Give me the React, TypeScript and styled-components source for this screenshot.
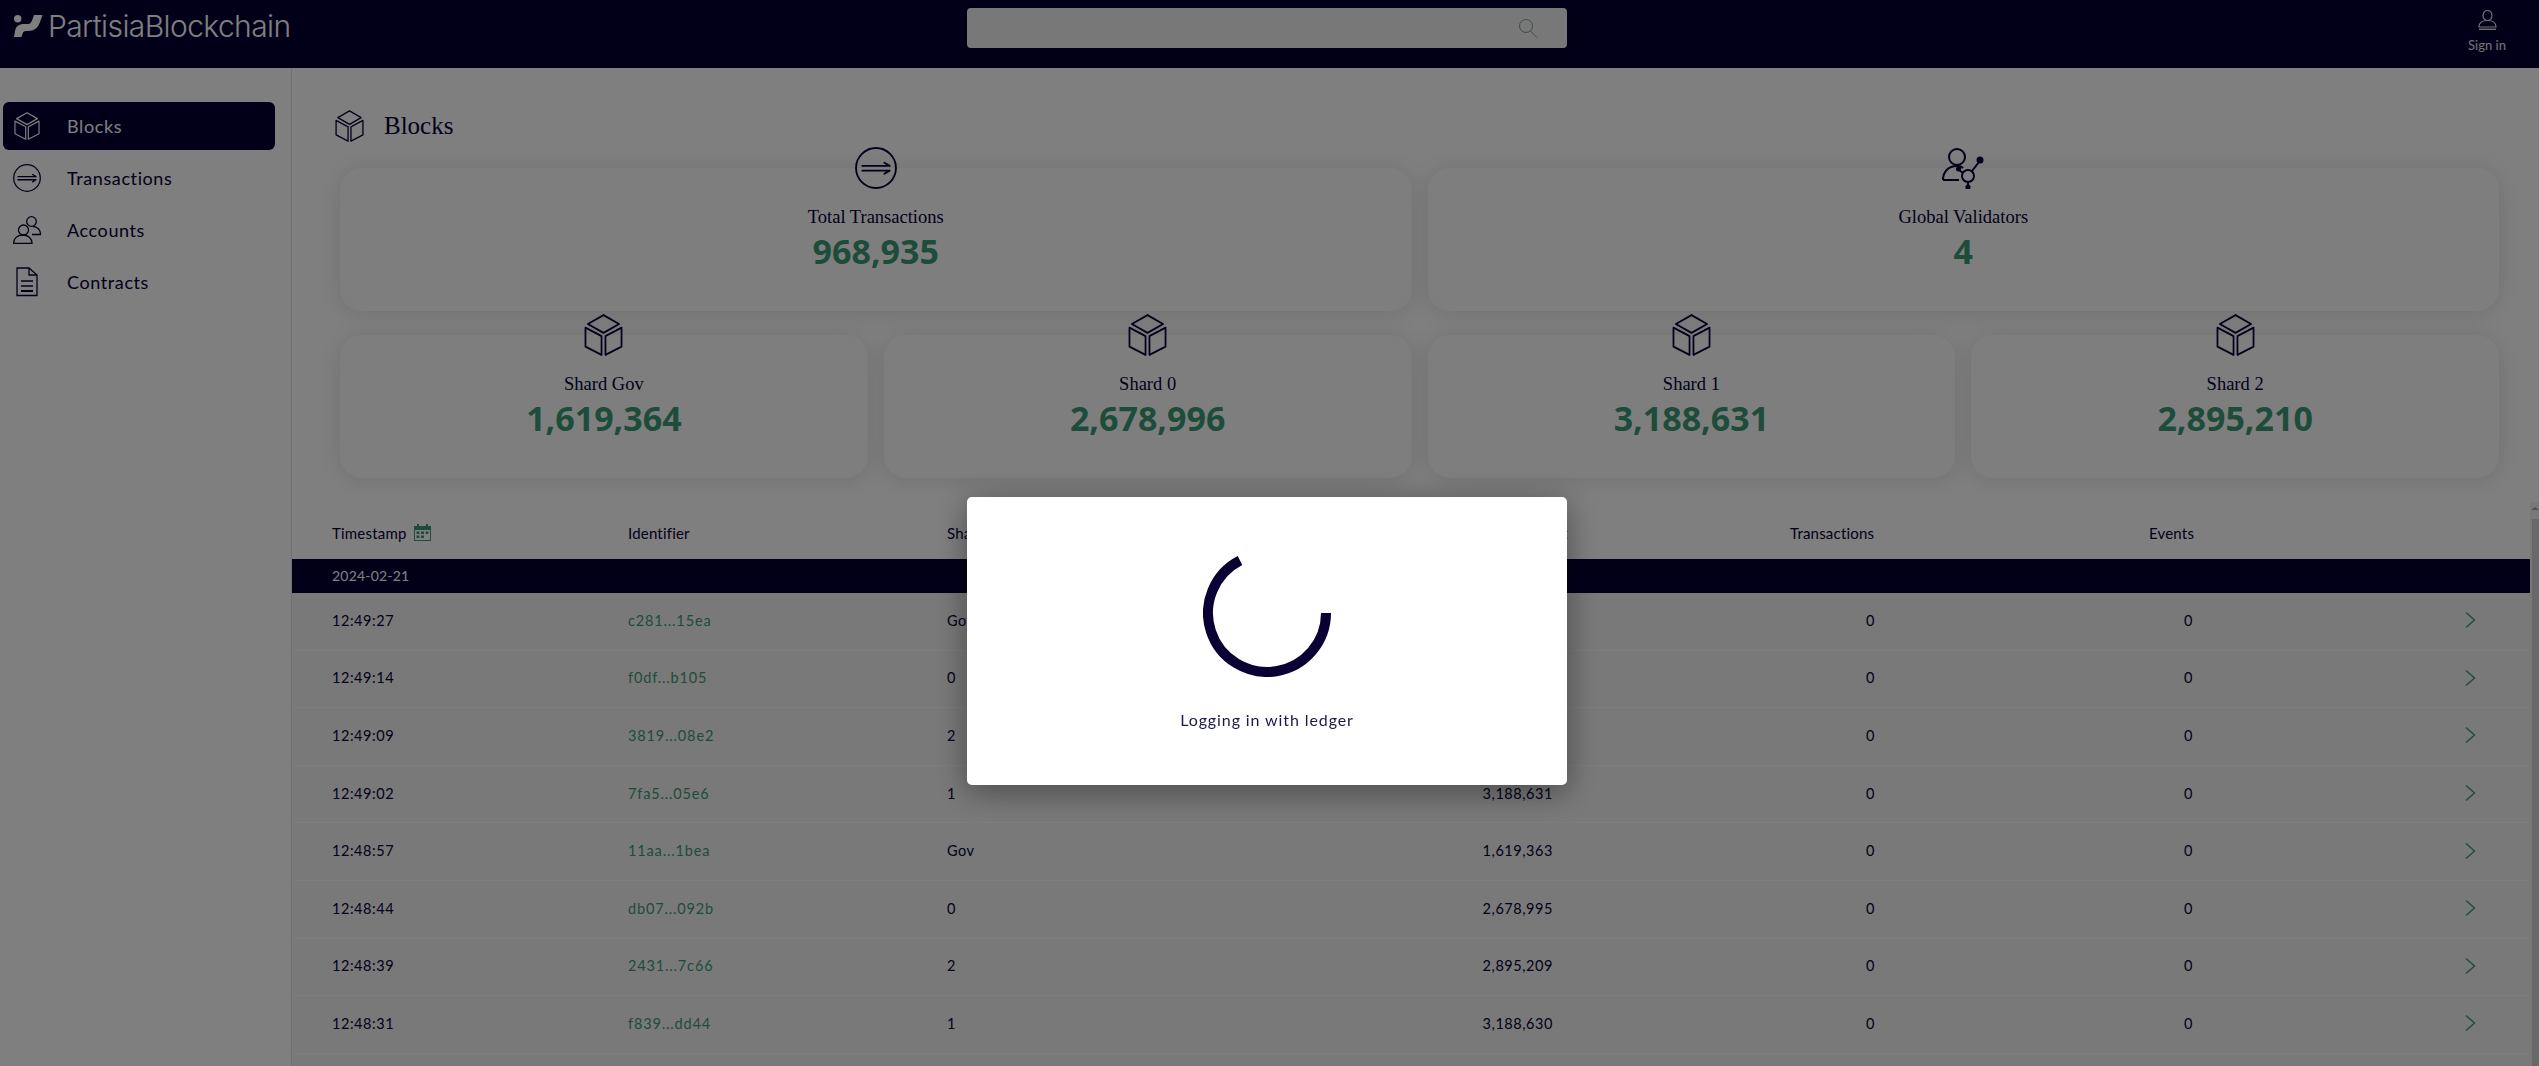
import styled, { createGlobalStyle } from "styled-components";

const navy = "#050033";
const green = "#3a9a75";

const GlobalStyle = createGlobalStyle`
    html, body {
        margin: 0;
        height: 100%;
        overflow: hidden;
        background: #ffffff;
        font-family: "Lato", "Open Sans", sans-serif;
        color: ${navy};
    }
    * { box-sizing: border-box; }
`;

const PageDiv = styled.div`
    display: flex;
    flex-direction: column;
    height: 100vh;
    overflow: hidden;
`;
const HeaderBar = styled.header`
    flex: 0 0 68px;
    display: grid;
    grid-template-columns: 1fr 600px 1fr;
    padding-right: 5px;
    background: ${navy};
    color: #ffffff;
`;
const LogoLink = styled.div`
    display: flex;
    align-items: flex-start;
    gap: 5px;
    padding: 15px 0 0 14px;
`;
const LogoText = styled.span`
    font-family: "Inter", sans-serif;
    font-weight: 300;
    font-size: 30px;
    line-height: 30px;
    letter-spacing: -0.6px;
    white-space: nowrap;
    margin-top: -4px;
`;
const SearchBox = styled.div`
    display: flex;
    align-items: center;
    justify-content: flex-end;
    height: 40px;
    margin-top: 8px;
    padding-right: 29px;
    border-radius: 4px;
    background: #f0f0f0;
    color: #6f9f8f;
`;
const SignIn = styled.div`
    justify-self: end;
    display: flex;
    flex-direction: column;
    align-items: center;
    gap: 7px;
    width: 60px;
    margin-right: 17px;
    padding-top: 10px;
    font-size: 13px;
    line-height: 16px;
    color: #e4e4ea;
`;
const BodyRow = styled.div`
    flex: 1;
    min-height: 0;
    display: flex;
`;
const Sidebar = styled.nav`
    flex: 0 0 292px;
    display: flex;
    flex-direction: column;
    gap: 4px;
    padding: 34px 16px 0 3px;
    border-right: 1px solid #e0e0e0;
`;
const NavItem = styled.div<{ $active?: boolean }>`
    display: flex;
    align-items: center;
    height: 48px;
    padding-left: 10px;
    border-radius: 6px;
    font-size: 18px;
    letter-spacing: 0.6px;
    background: ${(p) => (p.$active ? navy : "transparent")};
    color: ${(p) => (p.$active ? "#ffffff" : navy)};
`;
const NavIcon = styled.span`
    display: flex;
    justify-content: center;
    width: 28px;
    margin-right: 26px;
`;
const MainArea = styled.main`
    flex: 1;
    min-width: 0;
    display: flex;
    flex-direction: column;
    padding-top: 41px;
`;
const TitleRow = styled.div`
    display: flex;
    align-items: center;
    gap: 20px;
    height: 34px;
    padding-left: 43px;
    font-family: "Liberation Serif", serif;
    font-size: 25px;
`;
const CardGrid = styled.div`
    display: grid;
    grid-template-columns: repeat(4, 1fr);
    column-gap: 16px;
    row-gap: 24px;
    margin-top: 25px;
    padding: 0 40px 0 48px;
`;
const StatCard = styled.div<{ $span: number }>`
    grid-column: span ${(p) => p.$span};
    display: flex;
    flex-direction: column;
    align-items: center;
    height: 143px;
    border-radius: 22px;
    background: #fdfdfd;
    box-shadow: 0 2px 24px rgba(0, 0, 0, 0.12);
`;
const CardIcon = styled.div`
    height: 42px;
    margin-top: -21px;
`;
const CardTitle = styled.div`
    margin-top: 18px;
    font-family: "Liberation Serif", serif;
    font-size: 18.5px;
    line-height: 20px;
`;
const CardValue = styled.div`
    margin-top: 1px;
    font-family: "Open Sans", sans-serif;
    font-weight: 700;
    font-size: 34px;
    line-height: 46px;
    color: ${green};
`;
const TableSection = styled.section`
    flex: 1;
    min-height: 0;
    display: flex;
    margin-top: 24px;
    overflow: hidden;
`;
const TableArea = styled.div`
    flex: 1;
    min-width: 0;
    background: #f2f2f2;
`;
const columns = "296px 319px 534px 309px 359px 1fr auto";
const HeadRow = styled.div`
    display: grid;
    grid-template-columns: ${columns};
    align-items: center;
    height: 57px;
    padding: 4px 54px 0 40px;
    background: #ffffff;
    font-size: 15px;
`;
const HeadCell = styled.div`
    display: flex;
    align-items: center;
    gap: 7px;
    letter-spacing: 0.2px;
`;
const DateRow = styled.div`
    height: 34px;
    padding-left: 40px;
    background: ${navy};
    color: #ffffff;
    font-size: 14px;
    line-height: 34px;
    letter-spacing: 0.2px;
`;
const DataRow = styled.div`
    display: grid;
    grid-template-columns: ${columns};
    align-items: center;
    height: 57.6px;
    padding: 0 54px 2px 40px;
    border-bottom: 1px solid #fafafa;
    font-size: 14.5px;
    letter-spacing: 0.55px;
`;
const LinkCell = styled.div`
    color: ${green};
    letter-spacing: 0.85px;
`;
const NumberCell = styled.div<{ $width: number }>`
    width: ${(p) => p.$width}px;
    text-align: right;
`;
const ChevronCell = styled.div`
    display: flex;
    justify-content: flex-end;
    color: ${green};
`;
const ScrollTrack = styled.div`
    flex: 0 0 9px;
    display: flex;
    flex-direction: column;
    align-items: flex-end;
    background: #f1f1f1;
`;
const ScrollArrow = styled.div`
    width: 0;
    height: 0;
    margin: 5px 0 9px 0;
    border-left: 4px solid transparent;
    border-right: 4px solid transparent;
    border-bottom: 3px solid #a3a3a3;
`;
const ScrollThumb = styled.div`
    flex: 1;
    width: 7px;
    background: #d0d0d0;
`;
const Overlay = styled.div`
    position: fixed;
    inset: 0;
    display: flex;
    justify-content: center;
    align-items: flex-start;
    padding: 497px 5px 0 0;
    background: rgba(0, 0, 0, 0.5);
`;
const Modal = styled.div`
    display: flex;
    flex-direction: column;
    align-items: center;
    width: 600px;
    height: 288px;
    padding-top: 52px;
    border-radius: 5px;
    background: #ffffff;
    box-shadow: 0 6px 32px rgba(0, 0, 0, 0.4);
`;
const ModalText = styled.div`
    margin-top: 33px;
    font-size: 16px;
    line-height: 20px;
    letter-spacing: 0.9px;
    color: #1d1a47;
`;

const line = { fill: "none", stroke: "currentColor", strokeWidth: 1.800, strokeLinejoin: "round" as const, strokeLinecap: "round" as const };

const PartisiaMark = () => (
    <svg width="29" height="23" viewBox="0 0 29 23" fill="#ffffff">
        <circle cx="3.700" cy="3.800" r="3.700" />
        <path d="M0 22 L1 16 C2 11 5 9 10 9 L14 9 C16 9 17 8 18 5.500 L20 0 L28.500 0 L26 7 C24 13 20 16 14 16 L12 16 C10 16 9 17 8.600 18.500 L7.500 22 Z" />
    </svg>
);
const CubeIcon = ({ size = 40 }: { size?: number }) => (
    <svg width={Math.round(size * 0.92)} height={size} viewBox="0 0 40 40" preserveAspectRatio="none" {...line}>
        <path d="M20 1 L36 9.500 L20 18 L4 9.500 Z" />
        <path d="M1.500 13 V31 L18 39 V21 Z" />
        <path d="M38.500 13 V31 L22 39 V21 Z" />
    </svg>
);
const TransferIcon = ({ size = 40 }: { size?: number }) => (
    <svg width={size} height={size} viewBox="0 0 40 40" {...line}>
        <circle cx="20" cy="20" r="19" />
        <path d="M7 18 H33 L28 15" />
        <path d="M7 22.500 H33 L28 25.500" />
    </svg>
);
const AccountsIcon = ({ size = 28 }: { size?: number }) => (
    <svg width={size} height={size} viewBox="0 0 28 28" fill="none" stroke="currentColor" strokeWidth="1.300">
        <circle cx="18.500" cy="5.500" r="4.800" />
        <path d="M19 18.500 H27.500 C27.500 14 24.500 10.500 20 10.500" />
        <circle cx="10.500" cy="14" r="5" />
        <path d="M0.700 27.300 C0.700 22 4.500 19 10 19 C15 19 19 22 19 27.300 Z" />
    </svg>
);
const ContractIcon = () => (
    <svg width="24" height="30" viewBox="0 0 24 30" fill="none" stroke="currentColor" strokeWidth="1.300">
        <path d="M2 1 H14 L22 8 V28.500 H2 Z" />
        <path d="M14 1 V8 H22" />
        <path d="M6 14 H18 M6 19 H18" />
        <path d="M6 24 H18" strokeWidth="2" />
    </svg>
);
const PersonIcon = () => (
    <svg width="19" height="20" viewBox="0 0 19 20" fill="none" stroke="currentColor" strokeWidth="1.200">
        <ellipse cx="9.500" cy="5.500" rx="4.500" ry="5" />
        <path d="M1 17 C1 13 4 10.500 9.500 10.500 C15 10.500 18 13 18 17 Z" />
        <path d="M1 19.300 H18" strokeWidth="1.400" />
    </svg>
);
const ValidatorIcon = () => (
    <svg width="42" height="42" viewBox="0 0 42 42" fill="none" stroke="currentColor" strokeWidth="2">
        <circle cx="15" cy="10" r="8" />
        <path d="M1 33 C1 25 6 19 15 19 C18 19 20 20 21 21 M1 33 H17" />
        <circle cx="26" cy="29" r="6" />
        <path d="M30 24 L37 15 M21 26 L17 23 M26 35 V39" />
        <circle cx="38" cy="13" r="2.500" fill="currentColor" />
        <circle cx="16.500" cy="22" r="1.500" fill="currentColor" />
        <circle cx="26" cy="40" r="1.600" fill="currentColor" />
    </svg>
);
const SearchIcon = () => (
    <svg width="20" height="20" viewBox="0 0 20 20" fill="none" stroke="currentColor" strokeWidth="1">
        <circle cx="8" cy="8" r="6.500" />
        <path d="M12.500 13 L19 19.500" />
    </svg>
);
const CalendarIcon = () => (
    <svg width="17" height="17" viewBox="0 0 17 17" fill={green}>
        <path d="M3 0 H5 V2 H12 V0 H14 V2 H17 V17 H0 V2 H3 Z M1 6 V16 H16 V6 Z" />
        <path d="M2.500 7.500 H5.500 V10 H2.500 Z M7 7.500 H10 V10 H7 Z M11.500 7.500 H14.500 V10 H11.500 Z M2.500 11.500 H5.500 V14 H2.500 Z M7 11.500 H10 V14 H7 Z" />
    </svg>
);
const ChevronIcon = () => (
    <svg width="11" height="16" viewBox="0 0 11 16" fill="none" stroke="currentColor" strokeWidth="1.400">
        <path d="M1 0.500 L9.500 8 L1 15.500" />
    </svg>
);
const SpinnerIcon = () => (
    <svg width="128" height="128" viewBox="0 0 128 128" fill="none" stroke="#0b0033" strokeWidth="10">
        <path d="M123 64 A59 59 0 1 1 37 11.500" />
    </svg>
);

const rows = [
    ["12:49:27", "c281...15ea", "Gov", "1,619,364"],
    ["12:49:14", "f0df...b105", "0", "2,678,996"],
    ["12:49:09", "3819...08e2", "2", "2,895,210"],
    ["12:49:02", "7fa5...05e6", "1", "3,188,631"],
    ["12:48:57", "11aa...1bea", "Gov", "1,619,363"],
    ["12:48:44", "db07...092b", "0", "2,678,995"],
    ["12:48:39", "2431...7c66", "2", "2,895,209"],
    ["12:48:31", "f839...dd44", "1", "3,188,630"],
];
const shards = [
    ["Shard Gov", "1,619,364"],
    ["Shard 0", "2,678,996"],
    ["Shard 1", "3,188,631"],
    ["Shard 2", "2,895,210"],
];

export default function App() {
    return (
        <PageDiv>
            <GlobalStyle />
            <HeaderBar>
                <LogoLink>
                    <PartisiaMark />
                    <LogoText>PartisiaBlockchain</LogoText>
                </LogoLink>
                <SearchBox>
                    <SearchIcon />
                </SearchBox>
                <SignIn>
                    <PersonIcon />
                    <span>Sign in</span>
                </SignIn>
            </HeaderBar>
            <BodyRow>
                <Sidebar>
                    <NavItem $active>
                        <NavIcon><CubeIcon size={28} /></NavIcon>
                        Blocks
                    </NavItem>
                    <NavItem>
                        <NavIcon><TransferIcon size={28} /></NavIcon>
                        Transactions
                    </NavItem>
                    <NavItem>
                        <NavIcon><AccountsIcon /></NavIcon>
                        Accounts
                    </NavItem>
                    <NavItem>
                        <NavIcon><ContractIcon /></NavIcon>
                        Contracts
                    </NavItem>
                </Sidebar>
                <MainArea>
                    <TitleRow>
                        <CubeIcon size={32} />
                        Blocks
                    </TitleRow>
                    <CardGrid>
                        <StatCard $span={2}>
                            <CardIcon><TransferIcon size={42} /></CardIcon>
                            <CardTitle>Total Transactions</CardTitle>
                            <CardValue>968,935</CardValue>
                        </StatCard>
                        <StatCard $span={2}>
                            <CardIcon><ValidatorIcon /></CardIcon>
                            <CardTitle>Global Validators</CardTitle>
                            <CardValue>4</CardValue>
                        </StatCard>
                        {shards.map(([title, value]) => (
                            <StatCard $span={1} key={title}>
                                <CardIcon><CubeIcon size={42} /></CardIcon>
                                <CardTitle>{title}</CardTitle>
                                <CardValue>{value}</CardValue>
                            </StatCard>
                        ))}
                    </CardGrid>
                    <TableSection>
                        <TableArea>
                            <HeadRow>
                                <HeadCell>Timestamp <CalendarIcon /></HeadCell>
                                <HeadCell>Identifier</HeadCell>
                                <HeadCell>Shard</HeadCell>
                                <HeadCell>Block Height</HeadCell>
                                <HeadCell>Transactions</HeadCell>
                                <HeadCell>Events</HeadCell>
                            </HeadRow>
                            <DateRow>2024-02-21</DateRow>
                            {rows.map(([time, id, shard, height]) => (
                                <DataRow key={id}>
                                    <div>{time}</div>
                                    <LinkCell>{id}</LinkCell>
                                    <div>{shard}</div>
                                    <NumberCell $width={72}>{height}</NumberCell>
                                    <NumberCell $width={85}>0</NumberCell>
                                    <NumberCell $width={44}>0</NumberCell>
                                    <ChevronCell><ChevronIcon /></ChevronCell>
                                </DataRow>
                            ))}
                        </TableArea>
                        <ScrollTrack>
                            <ScrollArrow />
                            <ScrollThumb />
                        </ScrollTrack>
                    </TableSection>
                </MainArea>
            </BodyRow>
            <Overlay>
                <Modal>
                    <SpinnerIcon />
                    <ModalText>Logging in with ledger</ModalText>
                </Modal>
            </Overlay>
        </PageDiv>
    );
}
